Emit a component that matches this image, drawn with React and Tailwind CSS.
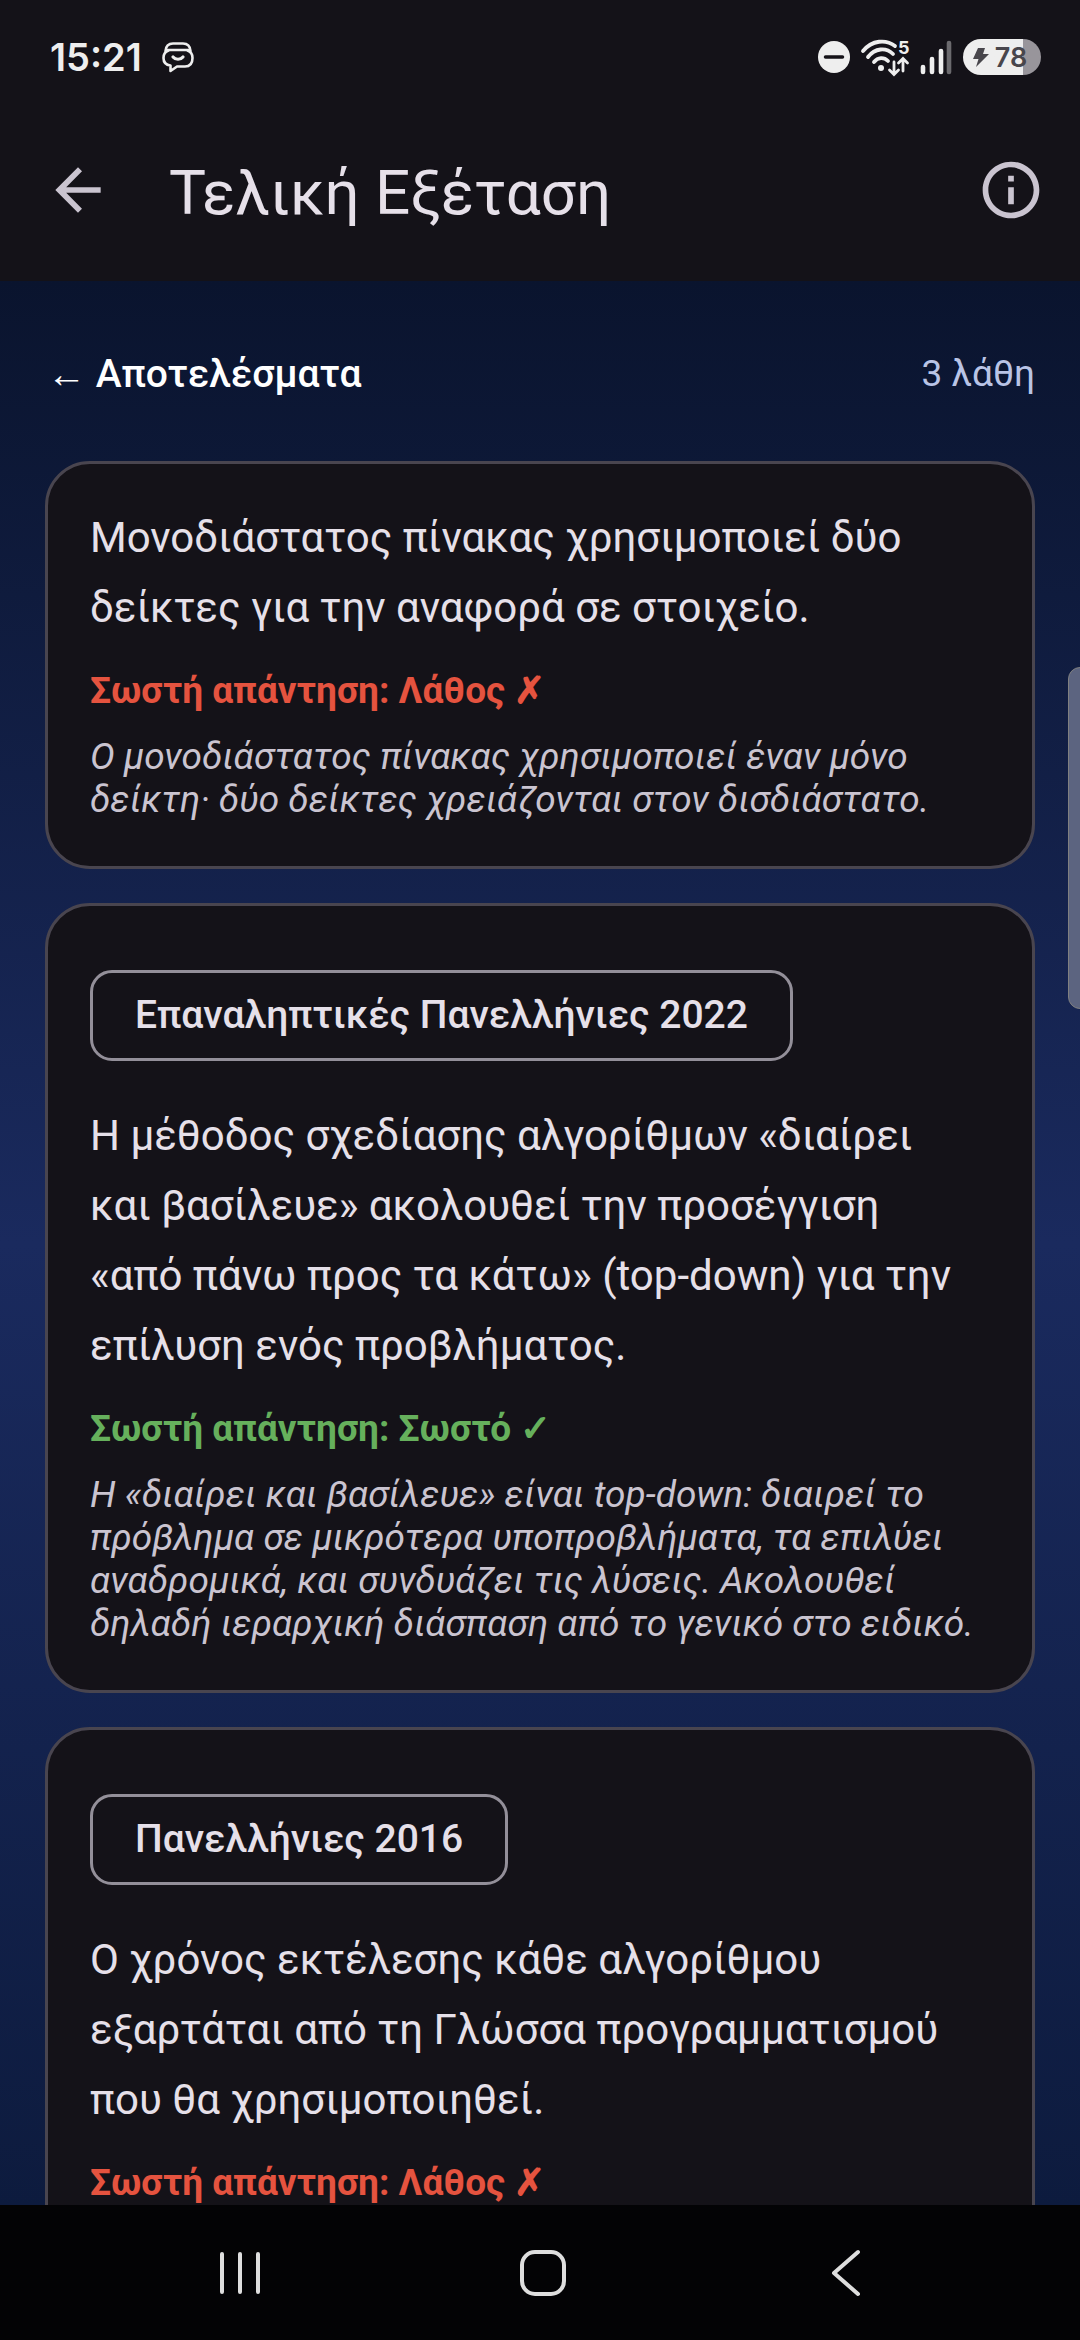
import { MdArrowBack, MdInfoOutline } from "react-icons/md";

const questions = [
  {
    text: "Μονοδιάστατος πίνακας χρησιμοποιεί δύο δείκτες για την αναφορά σε στοιχείο.",
    correct: false,
    explanation:
      "Ο μονοδιάστατος πίνακας χρησιμοποιεί έναν μόνο δείκτη· δύο δείκτες χρειάζονται στον δισδιάστατο.",
  },
  {
    source: "Επαναληπτικές Πανελλήνιες 2022",
    text: "Η μέθοδος σχεδίασης αλγορίθμων «διαίρει και βασίλευε» ακολουθεί την προσέγγιση «από πάνω προς τα κάτω» (top-down) για την επίλυση ενός προβλήματος.",
    correct: true,
    explanation:
      "Η «διαίρει και βασίλευε» είναι top-down: διαιρεί το πρόβλημα σε μικρότερα υποπροβλήματα, τα επιλύει αναδρομικά, και συνδυάζει τις λύσεις. Ακολουθεί δηλαδή ιεραρχική διάσπαση από το γενικό στο ειδικό.",
  },
  {
    source: "Πανελλήνιες 2016",
    text: "Ο χρόνος εκτέλεσης κάθε αλγορίθμου εξαρτάται από τη Γλώσσα προγραμματισμού που θα χρησιμοποιηθεί.",
    correct: false,
  },
];

function StatusBar() {
  return (
    <div className="flex h-[114px] items-center justify-between pr-[39px] pl-[50px] text-[#eeeeee]">
      <div className="flex items-center gap-5">
        <span className="font-['Inter',sans-serif] text-[38px] leading-none font-semibold">15:21</span>
        <svg className="h-8 w-8" viewBox="0 0 32 32" fill="none" stroke="currentColor" strokeWidth="2.6" strokeLinecap="round" strokeLinejoin="round">
          <path d="M3.500 10C4 4 7 2.500 11 2.500h10c4 0 7 1.500 7.500 7.500" />
          <path d="M5 9h22" />
          <path d="M6.500 9.500C3.500 10.500 1.500 13 1.500 17c0 4.500 2.500 7 7 7.500V30l6.500-4.500h8c5 0 7.500-3.500 7.500-8.500 0-4-2-6.500-5-7.500" />
          <path d="M11 16c2.500 3 7.500 3 10 0" strokeWidth="3.200" />
        </svg>
      </div>
      <div className="flex items-center gap-[11px]">
        <svg className="h-8 w-8" viewBox="0 0 32 32">
          <circle cx="16" cy="16" r="16" fill="currentColor" />
          <path d="M7.500 16h17" stroke="#141218" strokeWidth="3.500" strokeLinecap="round" />
        </svg>
        <svg className="h-9 w-12 overflow-visible" viewBox="0 0 48 36" fill="none" stroke="currentColor" strokeWidth="3.800" strokeLinecap="round">
          <path d="M2 12C11 1 25 0 34 7" />
          <path d="M7 18C14 9 25 8 32 15" />
          <path d="M13 23C17 18 23 18 27 22" />
          <circle cx="20" cy="29" r="3" fill="currentColor" stroke="none" />
          <path d="M33 23v12M28.500 31l4.500 4.500 4.500-4.500M42 32V20M37.500 24l4.500-4.500 4.500 4.500" strokeWidth="2.800" />
          <text x="37" y="15" fill="currentColor" stroke="none" className="font-['Inter',sans-serif] text-[18px] font-bold">5</text>
        </svg>
        <svg className="h-9 w-8" viewBox="0 0 32 36" stroke="currentColor" strokeWidth="4.600" strokeLinecap="round">
          <path d="M3 28v5M12 20v13M21 12v21" />
          <path d="M29 4v29" opacity="0.4" />
        </svg>
        <div className="flex h-9 w-[78px] items-center justify-center gap-1.5 rounded-full bg-linear-to-r from-[#eeeeee] from-77% to-[#98959b] to-77% pr-1 text-[#48464c]">
          <svg className="h-5 w-4" viewBox="0 0 16 20" fill="currentColor">
            <path d="M5 1h7l-2 6h6L3 20l2.500-8H0z" />
          </svg>
          <span className="font-['Inter',sans-serif] text-[27px] leading-none font-semibold">78</span>
        </div>
      </div>
    </div>
  );
}

function AppBar() {
  return (
    <header className="flex h-[167px] items-center pr-[35px] pb-4 pl-[44px] text-[#cac4d0]">
      <button aria-label="Πίσω">
        <MdArrowBack className="h-[68px] w-[68px]" />
      </button>
      <h1 className="flex-1 pt-1.5 pl-[57px] text-[62px] leading-none text-[#e6e0e9]">Τελική Εξέταση</h1>
      <button aria-label="Πληροφορίες">
        <MdInfoOutline className="h-[68px] w-[68px]" />
      </button>
    </header>
  );
}

function QuestionCard({ question }) {
  return (
    <article className="rounded-[45px] border-3 border-[#49454f] bg-[#141218] px-[42px] pt-[39px] pb-[45px]">
      {question.source && (
        <span className="mt-[25px] mb-10 inline-flex h-[91px] items-center rounded-[22px] border-3 border-[#938f99] px-[42px] text-[39px] leading-none font-medium">
          {question.source}
        </span>
      )}
      <p className="pr-5 text-[42px] leading-[70px]">{question.text}</p>
      <p className={`mt-5 text-[37px] leading-[56px] font-bold ${question.correct ? "text-[#66b05c]" : "text-[#e5533f]"}`}>
        Σωστή απάντηση: {question.correct ? "Σωστό ✓" : "Λάθος ✗"}
      </p>
      {question.explanation && (
        <p className="mt-4 text-[37px] leading-[43px] text-[#cac4d0] italic">{question.explanation}</p>
      )}
    </article>
  );
}

function NavBar() {
  return (
    <nav className="flex h-[135px] shrink-0 items-center justify-around bg-[#030305] pr-[83px] pl-[89px] text-[#dedede]">
      <button aria-label="Πρόσφατα">
        <svg className="h-12 w-12" viewBox="0 0 48 48" stroke="currentColor" strokeWidth="4" strokeLinecap="round">
          <path d="M6 5v38M24 5v38M42 5v38" />
        </svg>
      </button>
      <button aria-label="Αρχική">
        <svg className="h-12 w-12" viewBox="0 0 48 48" fill="none" stroke="currentColor" strokeWidth="4">
          <rect x="3" y="3" width="42" height="42" rx="13" />
        </svg>
      </button>
      <button aria-label="Πίσω στο σύστημα">
        <svg className="h-12 w-12" viewBox="0 0 48 48" fill="none" stroke="currentColor" strokeWidth="4" strokeLinecap="round" strokeLinejoin="round">
          <path d="M36 3 12 24l24 21" />
        </svg>
      </button>
    </nav>
  );
}

export default function App() {
  return (
    <div className="flex h-screen flex-col bg-[#141218] font-['Roboto',sans-serif] text-[#e6e0e9]">
      <StatusBar />
      <AppBar />
      <main className="relative min-h-0 flex-1 overflow-hidden bg-linear-to-b from-[#0a142e] via-[#1a2a5e] to-[#0d1b3e] px-[45px]">
        <div className="flex h-[180px] items-center justify-between pt-1.5">
          <button className="pl-0.5 text-[39px] font-medium text-white">← Αποτελέσματα</button>
          <span className="text-[37px] text-[#b9c4e6]">3 λάθη</span>
        </div>
        <div className="flex flex-col gap-[34px]">
          {questions.map((question) => (
            <QuestionCard key={question.text} question={question} />
          ))}
        </div>
        {/* scroll thumb */}
        <div className="absolute top-[386px] -right-3 h-[342px] w-6 rounded-xl border border-[#808080] bg-[#5c6480]" />
      </main>
      <NavBar />
    </div>
  );
}
